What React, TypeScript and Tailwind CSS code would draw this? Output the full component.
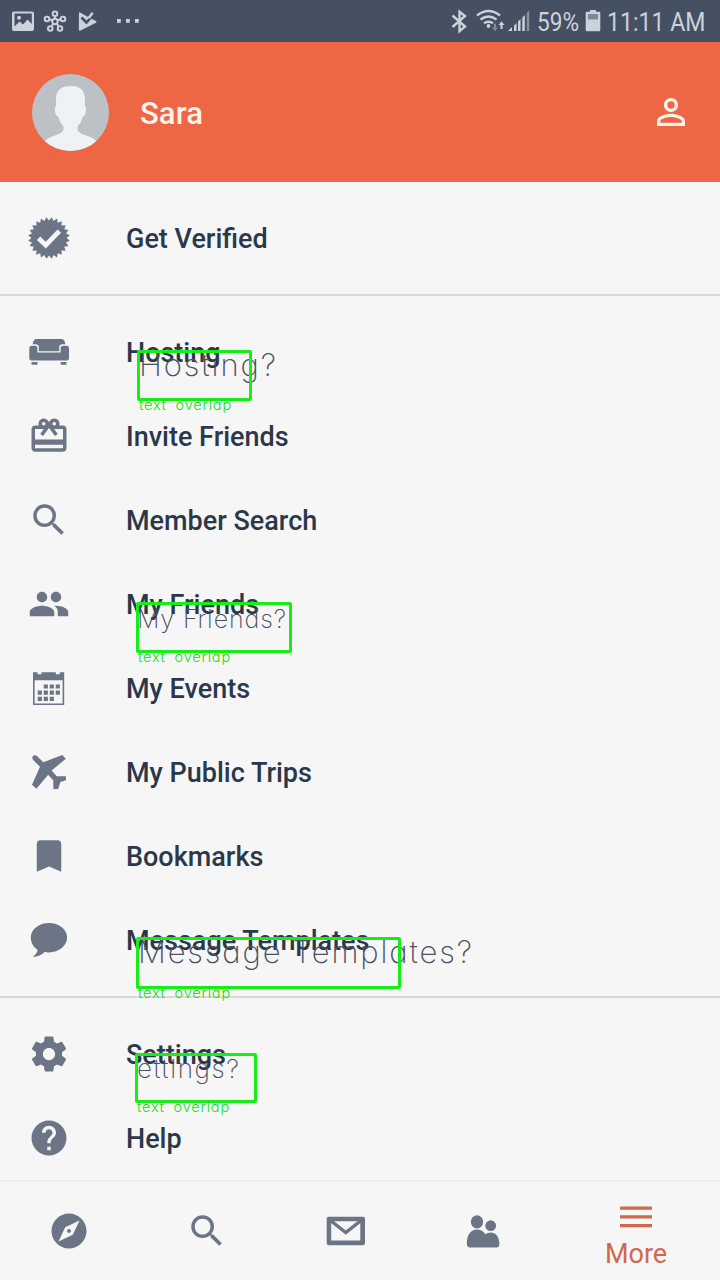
import type { ReactNode } from "react";
import {
  MdBookmark,
  MdCardGiftcard,
  MdExplore,
  MdHelp,
  MdPeople,
  MdPersonOutline,
  MdSearch,
} from "react-icons/md";

function Svg({ children, size = 42 }: { children: ReactNode; size?: number }) {
  return (
    <svg width={size} height={size} viewBox="0 0 42 42" fill="currentColor" className="block shrink-0">
      {children}
    </svg>
  );
}

const badgePoints = Array.from({ length: 48 }, (_, i) => {
  const r = i % 2 === 0 ? 21 : 17.6;
  const a = ((i + 1) * Math.PI) / 24;
  return `${(21 + r * Math.sin(a)).toFixed(2)},${(21 - r * Math.cos(a)).toFixed(2)}`;
}).join(" ");

const VerifiedIcon = () => (
  <Svg>
    <polygon points={badgePoints} />
    <path d="M10.6 21.2l7.2 7L31.3 14.2" fill="none" stroke="#f6f6f6" strokeWidth="4.8" />
  </Svg>
);

const SofaIcon = () => (
  <Svg>
    <path d="M8.2 8h25.6Q36 8 36.7 10.5L37.3 13.3H34.5Q31.2 13.3 31.2 16.5V20.3H10.8V16.5Q10.8 13.3 7.5 13.3H4.7L5.3 10.5Q6 8 8.2 8Z" />
    <path d="M3.3 14.8H7.2Q9.4 14.8 9.4 17V21.6H32.6V17Q32.6 14.8 34.8 14.8H38.8Q41 14.8 41 17V27.3Q41 29.5 38.8 29.5H3.3Q1.3 29.5 1.3 27.3V17Q1.3 14.8 3.3 14.8ZM3.5 31H9.5V33.8H3.5ZM32.7 31H38.5V33.8H32.7Z" />
  </Svg>
);

const CalendarIcon = () => (
  <Svg>
    <path
      fillRule="evenodd"
      d="M5 5.2H9.5V7.2H13.5V5.2H27.8V7.2H31.8V5.2H36.2V38H5ZM6.6 13.2V36.4H34.6V13.2Z"
    />
    <path d="M15.7 17.4h4.2v4.2h-4.2zM21.7 17.4h4.2v4.2h-4.2zM27.7 17.4h4.2v4.2h-4.2zM9.7 23.6h4.2v4.2h-4.2zM15.7 23.6h4.2v4.2h-4.2zM21.7 23.6h4.2v4.2h-4.2zM27.7 23.6h4.2v4.2h-4.2zM9.7 29.8h4.2v4.2h-4.2zM15.7 29.8h4.2v4.2h-4.2zM21.7 29.8h4.2v4.2h-4.2z" />
  </Svg>
);

const PlaneIcon = () => (
  <Svg>
    <path d="M5 4.8Q7 3.4 9 5L15.3 11.2L34.2 4L37.8 7.7L23.6 19.6L28.8 25.3H37.9V29.2L32.4 31L30.2 38H25.3V29.6L20.2 23.8L8.4 37.7L4 33.8L12 15.8L4.8 8.6Q3.8 6.4 5 4.8Z" />
  </Svg>
);

const ChatIcon = () => (
  <Svg>
    <path d="M21 4C31 4 39.1 10.3 39.1 18.6S31 33.4 21 33.4Q18.6 33.4 16.5 33C13 36.6 9 37.9 4.7 37.7Q8.8 35.3 9.7 30.8C5.3 28.2 2.8 23.5 2.8 18.6C2.8 10.3 11 4 21 4Z" />
  </Svg>
);

const GearIcon = () => (
  <svg width="42" height="42" viewBox="0 0 24 24" fill="currentColor">
    <path d="M19.43 12.98c.04-.32.07-.64.07-.98s-.03-.66-.07-.98l2.11-1.65c.19-.15.24-.42.12-.64l-2-3.46c-.12-.22-.39-.3-.61-.22l-2.49 1c-.52-.4-1.08-.73-1.69-.98l-.38-2.65C14.46 2.18 14.25 2 14 2h-4c-.25 0-.46.18-.49.42l-.38 2.65c-.61.25-1.17.59-1.69.98l-2.49-1c-.23-.09-.49 0-.61.22l-2 3.46c-.13.22-.07.49.12.64l2.11 1.65c-.04.32-.07.65-.07.98s.03.66.07.98l-2.11 1.65c-.19.15-.24.42-.12.64l2 3.46c.12.22.39.3.61.22l2.49-1c.52.4 1.08.73 1.69.98l.38 2.65c.03.24.24.42.49.42h4c.25 0 .46-.18.49-.42l.38-2.65c.61-.25 1.17-.59 1.69-.98l2.49 1c.23.09.49 0 .61-.22l2-3.46c.12-.22.07-.49-.12-.64l-2.11-1.65zM12 15.5c-1.93 0-3.5-1.57-3.5-3.5s1.57-3.5 3.5-3.5 3.5 1.57 3.5 3.5-1.57 3.5-3.5 3.5z" />
  </svg>
);

const MailIcon = () => (
  <Svg>
    <path fillRule="evenodd" d="M3.7 6.7H38Q40 6.7 40 8.7V33.3Q40 35.3 38 35.3H3.7Q1.7 35.3 1.7 33.3V8.7Q1.7 6.7 3.7 6.7ZM6.2 11.2V30.5H35.3V11.2Z" />
    <path d="M5.5 10.5L20.8 22.5L36 10.5" fill="none" stroke="currentColor" strokeWidth="3.4" />
  </Svg>
);

const FriendsIcon = () => (
  <Svg>
    <ellipse cx="15" cy="11.8" rx="6.2" ry="6.6" />
    <circle cx="28.7" cy="15.7" r="5.4" />
    <path d="M4.8 33C5 25 8.5 19.4 15 19.4Q20.5 19.4 23.3 24.2Q25.5 22.4 28.7 22.4C34 22.4 37.2 27 37.4 33.5Q37.4 37.4 34.5 37.4H7.5Q4.7 37.4 4.8 33Z" />
  </Svg>
);

function Marked({ text, frame, textStyle, note }: { text: string; frame: string; textStyle: string; note: string }) {
  return (
    <>
      <span
        className={`absolute font-['Inter',sans-serif] leading-none font-extralight whitespace-pre text-[#4a4f5e] [font-feature-settings:'cv11'] ${textStyle}`}
      >
        {text}
      </span>
      <span className={`absolute rounded-[2px] border-3 border-[#17ee17] ${frame}`} />
      <span
        className={`absolute font-['Inter',sans-serif] text-[14.5px] leading-none font-light tracking-[0.8px] whitespace-pre text-[#0fe00f] [font-feature-settings:'cv11'] [word-spacing:4px] ${note}`}
      >
        text overlap
      </span>
    </>
  );
}

function Row({ icon, label, children }: { icon: ReactNode; label: string; children?: ReactNode }) {
  return (
    <li className="relative flex h-[84px] items-center pl-7">
      <span className="w-[98px] text-[#6b7585]">{icon}</span>
      <span className="pt-0.5 text-[27px] leading-8 font-medium whitespace-nowrap text-[#2b384a]">{label}</span>
      {children}
    </li>
  );
}

function StatusBar() {
  return (
    <div className="flex h-[42px] items-center justify-between bg-[#455062] text-[#ccd2da]">
      <svg width="150" height="42" viewBox="0 0 150 42" fill="currentColor">
        <path fillRule="evenodd" d="M14 11.500h18q2 0 2 2v15.500q0 2-2 2H14q-2 0-2-2V13.500q0-2 2-2zM14.500 13.500v13l5-5 3.500 3 4.500-5 4.300 4.500v-10.500z" />
        <circle cx="19" cy="17.700" r="2" />
        <g fill="none" stroke="currentColor" strokeWidth="2">
          <path d="M55 21V16M55 21L48 19M55 21l7-2M55 21l-4 6M55 21l4 6" />
          <g fill="#455062">
            <circle cx="55" cy="21.500" r="2.700" />
            <circle cx="55" cy="13.700" r="2.300" />
            <circle cx="47" cy="19" r="2.300" />
            <circle cx="63" cy="19" r="2.300" />
            <circle cx="50.300" cy="28.500" r="2.300" />
            <circle cx="60" cy="28.500" r="2.300" />
          </g>
        </g>
        <path d="M79 12l11 6 6 3q1 1 0 1.800L80.500 30.500q-1.700.5-1.700-1z" />
        <path d="M81.500 17.500l5 5 9-10.500" fill="none" stroke="#455062" strokeWidth="2.600" />
        <path d="M88.500 18.200l4.200-5.500" stroke="currentColor" strokeWidth="2.500" />
        <path d="M117 19h3.800v3.800h-3.800zM126 19h3.800v3.800h-3.800zM135 19h3.800v3.800h-3.800z" />
      </svg>
      <div className="flex h-full items-center">
        <svg width="88" height="42" viewBox="448 0 88 42" fill="currentColor">
          <path d="M452.500 15.500l12.500 11-5.500 4.700V11.800l5.500 4.200-12.500 11" fill="none" stroke="currentColor" strokeWidth="2.400" />
          <g fill="none" stroke="currentColor" strokeWidth="2.400">
            <path d="M477 15.500q11.500-9 23 0M480.500 19.500q8-6 16 0M484 23.300q4.500-3 9 0" />
          </g>
          <circle cx="488.500" cy="26" r="1.900" />
          <path d="M494 23.500h2v4h2l-3 3.700-3-3.700h2z" opacity=".45" />
          <path d="M500.500 29h2v-4h2l-3-3.700-3 3.700h2z" />
          <path d="M508 31l4-4v4zM514 25.500l2.500-2.500v8H514zM518 21.500l2.500-2.500v12H518zM522.300 17.500l2.500-2.500v16h-2.500z" />
          <path d="M526.700 13l2.500-2.500V31h-2.500z" opacity=".5" />
        </svg>
        <span className="w-[42px] pt-0.5 pl-[1px] text-[26px] leading-none">
          <span className="block origin-left scale-x-[.87] whitespace-nowrap">59%</span>
        </span>
        <svg width="30" height="42" viewBox="578 0 30 42" fill="currentColor">
          <path d="M590 10h6v1.700h3q1.300 0 1.300 1.300v17q0 1.300-1.300 1.300h-12q-1.300 0-1.300-1.300V13q0-1.300 1.300-1.300h3z" />
          <path d="M588 14h10v5.500h-10z" fill="#7f8896" />
        </svg>
        <span className="w-[112px] pt-0.5 text-[26px] leading-none">
          <span className="-ml-px block origin-left scale-x-[.887] whitespace-nowrap">11:11 AM</span>
        </span>
      </div>
    </div>
  );
}

function Avatar() {
  return (
    <svg width="77" height="77" viewBox="0 0 77 77" className="block shrink-0">
      <defs>
        <clipPath id="avatar-clip">
          <circle cx="38.500" cy="38.500" r="38.500" />
        </clipPath>
      </defs>
      <g clipPath="url(#avatar-clip)">
        <rect width="77" height="77" fill="#bcc1c5" />
        <path
          fill="#eef2f5"
          d="M38.500 12C29 12 24 16.500 24 25V32Q22.300 33 23 37Q23.500 41.500 26 42.500Q27.500 48.500 31.500 52.500V56Q29.500 59.500 24 61Q16 63.500 11.500 68V77H66V68Q61 63.500 53 61Q47.500 59.500 45.500 56V52.500Q49.500 48.500 51 42.500Q53.500 41.500 54 37Q54.500 33 53 32V25C53 16.500 48 12 38.500 12Z"
        />
      </g>
    </svg>
  );
}

export default function App() {
  return (
    <div className="flex h-[1280px] w-[720px] flex-col overflow-hidden bg-[#f6f6f6] font-['Roboto',sans-serif]">
      <StatusBar />
      <header className="flex h-[140px] items-center bg-[#ee6643] pr-7 pl-8 text-[#fff3ec]">
        <Avatar />
        <h1 className="ml-[31px] flex-1 pt-[3px] text-[31px] leading-9 font-medium tracking-[0.1px]">Sara</h1>
        <MdPersonOutline size={42} />
      </header>

      <ul className="border-b-2 border-[#d9d9d9] py-3.5">
        <Row icon={<VerifiedIcon />} label="Get Verified" />
      </ul>

      <ul className="border-b-2 border-[#d9d9d9] py-3.5">
        <Row icon={<SofaIcon />} label="Hosting">
          <Marked text="Hosting?" frame="top-[40px] left-[137px] h-[51px] w-[115px]" textStyle="left-[139px] top-[39px] text-[31px] tracking-[1.9px]" note="left-[139px] top-[88px]" />
        </Row>
        <Row icon={<MdCardGiftcard size={42} />} label="Invite Friends" />
        <Row icon={<MdSearch size={42} />} label="Member Search" />
        <Row icon={<MdPeople size={42} />} label="My Friends">
          <Marked text="My Friends?" frame="top-[40px] left-[136px] h-[51px] w-[156px]" textStyle="left-[137px] top-[45px] text-[25px] tracking-[0.9px]" note="left-[138px] top-[88px]" />
        </Row>
        <Row icon={<CalendarIcon />} label="My Events" />
        <Row icon={<PlaneIcon />} label="My Public Trips" />
        <Row icon={<MdBookmark size={42} />} label="Bookmarks" />
        <Row icon={<ChatIcon />} label="Message Templates">
          <Marked text="Message Templates?" frame="top-[39px] left-[136px] h-[52px] w-[265px]" textStyle="left-[138px] top-[38px] text-[31px] tracking-[1.85px]" note="left-[138px] top-[88px]" />
        </Row>
      </ul>

      <ul className="pt-3.5">
        <Row icon={<GearIcon />} label="Settings">
          <Marked text="ettings?" frame="top-[41px] left-[135px] h-[50px] w-[122px]" textStyle="left-[137px] top-[44px] text-[26px] tracking-[1.6px]" note="left-[137px] top-[88px]" />
        </Row>
        <Row icon={<MdHelp size={42} />} label="Help" />
      </ul>

      <nav className="flex h-[100px] items-center border-t-2 border-[#ececec] text-[#6b7585]">
        <div className="flex w-[138px] justify-center"><MdExplore size={42} /></div>
        <div className="flex w-[138px] justify-center"><MdSearch size={42} /></div>
        <div className="flex w-[139px] justify-center"><MailIcon /></div>
        <div className="flex w-[135px] justify-center"><FriendsIcon /></div>
        <div className="flex flex-1 flex-col items-center self-end pb-2 pl-0.5 text-[#d0694f]">
          <svg width="32" height="22" viewBox="0 0 32 22" fill="currentColor">
            <path d="M0 0.500h32v3.300H0zM0 9.200h32v3.300H0zM0 17.900h32v3.300H0z" />
          </svg>
          <span className="mt-2 text-[27px] leading-9">More</span>
        </div>
      </nav>
    </div>
  );
}
